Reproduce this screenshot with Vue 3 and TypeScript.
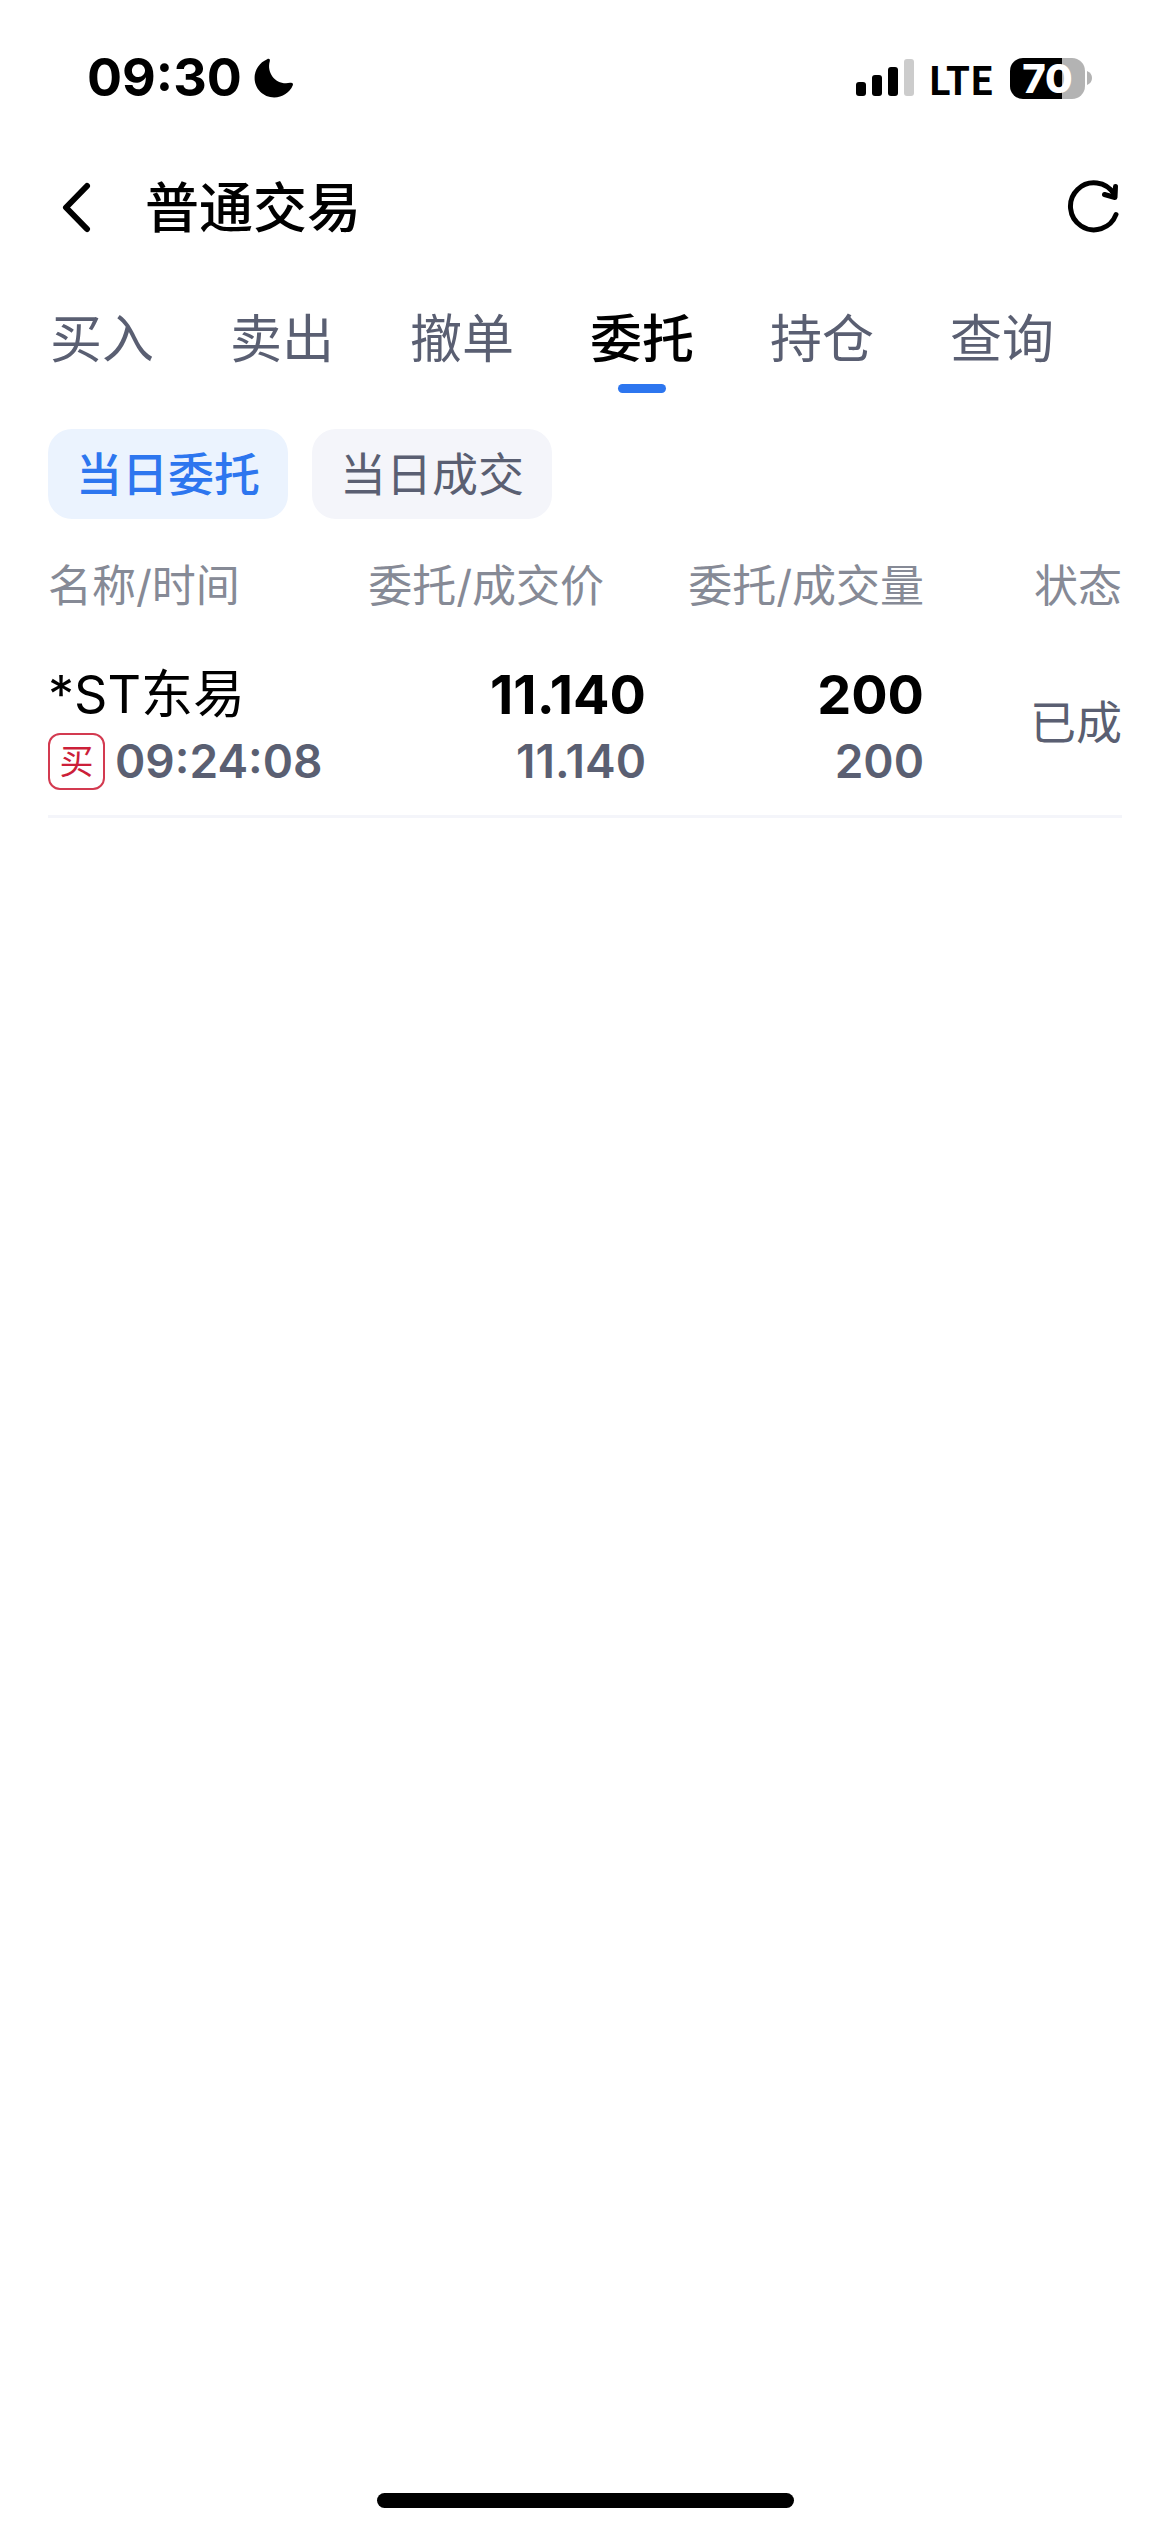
<script setup lang="ts">
import { ref } from 'vue'

interface Order {
  name: string
  side: string
  time: string
  orderPrice: string
  dealPrice: string
  orderQty: string
  dealQty: string
  status: string
}

const tabs: string[] = ['买入', '卖出', '撤单', '委托', '持仓', '查询']
const filters: string[] = ['当日委托', '当日成交']
const activeTab = ref('委托')
const activeFilter = ref('当日委托')

const orders: Order[] = [
  {
    name: '*ST东易',
    side: '买',
    time: '09:24:08',
    orderPrice: '11.140',
    dealPrice: '11.140',
    orderQty: '200',
    dealQty: '200',
    status: '已成',
  },
]
</script>

<template>
  <div class="screen">
    <div class="status-bar">
      <div class="status-left">
        <span class="clock">09:30</span>
        <svg class="moon" viewBox="0 0 40 40" aria-hidden="true">
          <path d="M13.2 1.2C14.8 .3 16.4 1.1 15.8 3.2C12.2 15.5 22.5 27.6 36 24.8C38.2 24.2 39.6 25.4 38.8 27.2C35.8 34.6 28.4 39.4 20.2 39.4C9.2 39.4.6 30.8.6 20C.6 11.6 5.6 4.4 13.2 1.2Z" />
        </svg>
      </div>
      <div class="status-right">
        <svg class="signal" viewBox="0 0 58 38" aria-hidden="true">
          <rect x="0" y="23" width="10" height="14" rx="3" />
          <rect x="16" y="16" width="10" height="21" rx="3" />
          <rect x="32" y="8" width="10" height="29" rx="3" />
          <rect x="48" y="0" width="10" height="37" rx="3" fill="#cccccc" />
        </svg>
        <span class="network">LTE</span>
        <div class="battery">
          <span class="battery-level">70</span>
          <svg class="battery-tip" viewBox="0 0 5 14" aria-hidden="true">
            <path d="M0 0Q5 2 5 7Q5 12 0 14Z" fill="#b3b3b3" />
          </svg>
        </div>
      </div>
    </div>

    <header class="nav-bar">
      <button class="icon-button" type="button" aria-label="返回">
        <svg width="32" height="52" viewBox="0 0 32 52" aria-hidden="true">
          <path d="M27 5L6 26.500L27 48" fill="none" stroke="#000" stroke-width="6" stroke-linecap="round" stroke-linejoin="round" />
        </svg>
      </button>
      <h1>普通交易</h1>
      <button class="icon-button refresh" type="button" aria-label="刷新">
        <svg width="56" height="56" viewBox="0 0 56 56" aria-hidden="true">
          <g fill="none" stroke="#000" stroke-width="5" stroke-linecap="round" stroke-linejoin="round">
            <path d="M49 35.500A23.500 23.500 0 1 1 47 15" />
            <path d="M48.500 7.500L48 18.500L37.500 15.500" />
          </g>
        </svg>
      </button>
    </header>

    <nav class="tabs">
      <button
        v-for="tab in tabs"
        :key="tab"
        type="button"
        class="tab"
        :class="{ active: tab === activeTab }"
        @click="activeTab = tab"
      >
        {{ tab }}
      </button>
    </nav>

    <div class="filters">
      <button
        v-for="item in filters"
        :key="item"
        type="button"
        class="filter"
        :class="{ active: item === activeFilter }"
        @click="activeFilter = item"
      >
        {{ item }}
      </button>
    </div>

    <main class="list">
      <table>
        <colgroup>
          <col />
          <col class="col-price" />
          <col class="col-qty" />
          <col class="col-status" />
        </colgroup>
        <thead>
          <tr>
            <th scope="col">名称/时间</th>
            <th scope="col" class="price-head">委托/成交价</th>
            <th scope="col">委托/成交量</th>
            <th scope="col">状态</th>
          </tr>
        </thead>
        <tbody>
          <tr v-for="order in orders" :key="order.time">
            <td>
              <div class="primary name">{{ order.name }}</div>
              <div class="secondary stamp">
                <span class="side">{{ order.side }}</span>
                <span>{{ order.time }}</span>
              </div>
            </td>
            <td>
              <div class="primary">{{ order.orderPrice }}</div>
              <div class="secondary">{{ order.dealPrice }}</div>
            </td>
            <td>
              <div class="primary">{{ order.orderQty }}</div>
              <div class="secondary">{{ order.dealQty }}</div>
            </td>
            <td class="status">{{ order.status }}</td>
          </tr>
        </tbody>
      </table>
    </main>

    <div class="home-indicator"></div>
  </div>
</template>

<style>
body {
  margin: 0;
  background: #fff;
}
</style>

<style scoped>
.screen {
  display: flex;
  flex-direction: column;
  min-height: 100vh;
  box-sizing: border-box;
  background: #fff;
  color: #000;
  font-family: Inter, "Noto Sans CJK SC", sans-serif;
}

button {
  margin: 0;
  padding: 0;
  border: 0;
  background: none;
  font: inherit;
  color: inherit;
}

svg {
  display: block;
}

.status-bar {
  display: flex;
  justify-content: space-between;
  align-items: center;
  height: 60px;
  padding: 48px 78px 33px 87px;
}

.status-left,
.status-right {
  display: flex;
  align-items: center;
}

.clock {
  font-size: 52px;
  line-height: 60px;
  font-weight: 700;
}

.moon {
  width: 40px;
  height: 40px;
  margin-left: 12px;
}

.signal {
  width: 58px;
  height: 38px;
}

.network {
  margin-left: 14px;
  font-family: "Noto Sans CJK SC", sans-serif;
  font-size: 39px;
  line-height: 56px;
  font-weight: 700;
}

.battery {
  display: flex;
  align-items: center;
  margin-left: 16px;
}

.battery-level {
  width: 75px;
  height: 41px;
  border-radius: 13px;
  background: linear-gradient(to right, #000 70%, #b3b3b3 70%);
  color: #fff;
  font-size: 40px;
  line-height: 41px;
  font-weight: 800;
  text-align: center;
}

.battery-tip {
  width: 5px;
  height: 14px;
  margin-left: 2px;
}

.nav-bar {
  display: flex;
  align-items: center;
  height: 132px;
  padding: 0 47px 0 60px;
}

.nav-bar h1 {
  flex: 1;
  margin: 0 0 0 53px;
  padding-bottom: 4px;
  font-family: "Noto Sans CJK SC", sans-serif;
  font-size: 54px;
  line-height: 72px;
  font-weight: 500;
}

.tabs {
  display: flex;
  gap: 76px;
  padding: 31px 50px 0;
}

.tab {
  display: flex;
  flex-direction: column;
  align-items: center;
  gap: 8px;
  color: #5a5f72;
  font-size: 52px;
  line-height: 72px;
}

.tab::after {
  content: "";
  width: 48px;
  height: 9px;
  border-radius: 5px;
}

.tab.active {
  color: #000;
  font-weight: 500;
}

.tab.active::after {
  background: #2d76ef;
}

.filters {
  display: flex;
  gap: 24px;
  padding: 36px 48px 37px;
}

.filter {
  width: 240px;
  height: 90px;
  border-radius: 24px;
  background: #f4f5fa;
  color: #5a5f72;
  font-size: 46px;
  line-height: 72px;
}

.filter.active {
  background: #ebf3fe;
  color: #2d76ef;
  font-weight: 500;
}

.list {
  padding: 0 48px;
}

table {
  width: 100%;
  table-layout: fixed;
  border-collapse: separate;
  border-spacing: 0;
}

.col-price {
  width: 306px;
}

.col-qty {
  width: 278px;
}

.col-status {
  width: 198px;
}

th {
  padding: 0;
  color: #868a96;
  font-size: 44px;
  line-height: 60px;
  font-weight: 400;
  text-align: right;
  white-space: nowrap;
}

.price-head {
  padding-right: 42px;
}

td {
  padding: 46px 0 21px;
  border-bottom: 3px solid #f4f5fa;
  text-align: right;
  white-space: nowrap;
}

th:first-child,
td:first-child {
  text-align: left;
}

.primary {
  font-size: 54px;
  line-height: 66px;
  font-weight: 700;
}

.primary.name {
  font-size: 52px;
  font-weight: 400;
}

.secondary {
  color: #5a5f72;
  font-size: 46px;
  line-height: 66px;
  font-weight: 600;
}

.stamp {
  display: flex;
  align-items: center;
  gap: 10px;
}

.side {
  box-sizing: border-box;
  width: 57px;
  height: 57px;
  border: 2px solid #d33a50;
  border-radius: 12px;
  color: #cc1f39;
  font-size: 34px;
  line-height: 53px;
  font-weight: 400;
  text-align: center;
}

.status {
  padding: 12px 0 0;
  color: #5a5f72;
  font-size: 46px;
  line-height: 66px;
}

.home-indicator {
  align-self: center;
  width: 417px;
  max-width: 36%;
  height: 15px;
  margin: auto 0 24px;
  border-radius: 8px;
  background: #000;
}
</style>
